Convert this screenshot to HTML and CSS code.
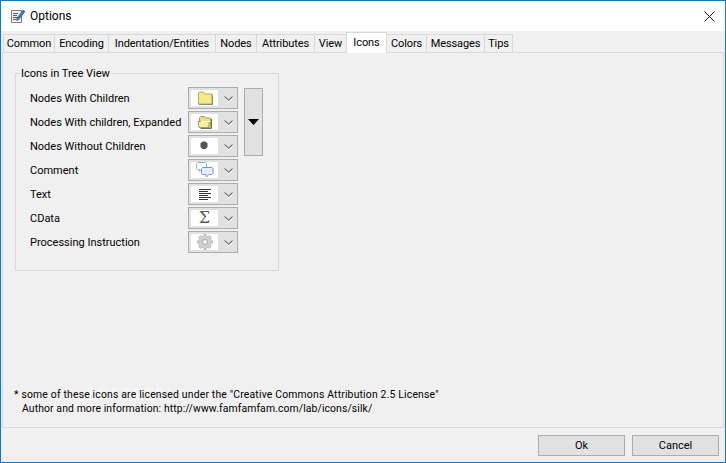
FILE: index.html
```html
<!DOCTYPE html>
<html lang="en">
<head>
<meta charset="utf-8">
<title>Options</title>
<link rel="stylesheet" href="styles.css">
</head>
<body>
<div class="window">
  <header class="titlebar">
    <svg class="app-icon" width="16" height="16" viewBox="0 0 16 16">
      <path d="M1.500 2.500h10v12h-10z" fill="#f4f4f4" stroke="#7d7d7d"/>
      <path d="M3 5.500h5M3 7.500h4M3 9.500h5M3 11.500h3" stroke="#555" fill="none"/>
      <path d="M7 10l6-8 2 1.500-6 8-2.500 1z" fill="#3d7fc4" stroke="#25527f" stroke-width=".6"/>
    </svg>
    <span class="title">Options</span>
    <svg class="close" width="11" height="11" viewBox="0 0 11 11"><path d="M.5.500l10 10M10.500.500l-10 10" stroke="#111" stroke-width="1" fill="none"/></svg>
  </header>
  <nav class="tabs">
    <span class="tab t-common">Common</span>
    <span class="tab t-encoding">Encoding</span>
    <span class="tab t-indent">Indentation/Entities</span>
    <span class="tab t-nodes">Nodes</span>
    <span class="tab t-attr">Attributes</span>
    <span class="tab t-view">View</span>
    <span class="tab active t-icons">Icons</span>
    <span class="tab t-colors">Colors</span>
    <span class="tab t-messages">Messages</span>
    <span class="tab t-tips">Tips</span>
  </nav>
  <main class="panel">
    <section class="group">
      <h2 class="legend">Icons in Tree View</h2>
      <div class="group-body">
        <div class="rows">
          <div class="row"><span class="label">Nodes With Children</span>
            <div class="combo"><span class="swatch">
              <svg width="16" height="16" viewBox="0 0 16 16"><path d="M1.500 14v-11l1-1h4l1 2h7.500v10z" fill="#f5ec86" stroke="#b3a85c"/><path d="M2 14.500h14M15.500 5v9" stroke="#8a8a7c"/></svg>
            </span><svg class="chev" width="9" height="5" viewBox="0 0 9 5"><path d="M.5.500l4 3.500 4-3.500" fill="none" stroke="#444"/></svg></div></div>
          <div class="row"><span class="label">Nodes With children, Expanded</span>
            <div class="combo"><span class="swatch">
              <svg width="16" height="16" viewBox="0 0 16 16"><path d="M2.500 13.500v-10l1-1h4l1 1.500h5v9.500z" fill="#eee07a" stroke="#a89d55"/><path d="M1 7.500h10l1.500 1.500-1.500 4.500h-9z" fill="#f7f09a" stroke="#a89d55"/><path d="M4 7.500h9.500" stroke="#fff"/><path d="M14.500 5v9.500h-11" fill="none" stroke="#6e6e62"/></svg>
            </span><svg class="chev" width="9" height="5" viewBox="0 0 9 5"><path d="M.5.500l4 3.500 4-3.500" fill="none" stroke="#444"/></svg></div></div>
          <div class="row"><span class="label">Nodes Without Children</span>
            <div class="combo"><span class="swatch">
              <svg width="16" height="16" viewBox="0 0 16 16"><path d="M5.500 3.500h3l1 1 1 1v3.500l-1 1-1 1h-3l-1-1-1-1V5.500l1-1z" fill="#555"/></svg>
            </span><svg class="chev" width="9" height="5" viewBox="0 0 9 5"><path d="M.5.500l4 3.500 4-3.500" fill="none" stroke="#444"/></svg></div></div>
          <div class="row"><span class="label">Comment</span>
            <div class="combo"><span class="swatch">
              <svg width="18" height="16" viewBox="0 0 18 16"><path d="M1.500.500h8l1 1v5l-1 1h-4l-2 2v-2h-2l-1-1v-5z" fill="#fff" stroke="#8eb4dc"/><path d="M6.500 5.500h9.500l1 1v5l-1 1h-3l-2.500 2.500-.5-2.500h-3.500l-1-1v-5z" fill="#e3eefa" stroke="#6c9bd0"/></svg>
            </span><svg class="chev" width="9" height="5" viewBox="0 0 9 5"><path d="M.5.500l4 3.500 4-3.500" fill="none" stroke="#444"/></svg></div></div>
          <div class="row"><span class="label">Text</span>
            <div class="combo"><span class="swatch">
              <svg width="16" height="16" viewBox="0 0 16 16"><path d="M2 3.500h12M2 5.500h9M2 7.500h12M2 9.500h9M2 11.500h12M2 13.500h9" stroke="#333" fill="none"/></svg>
            </span><svg class="chev" width="9" height="5" viewBox="0 0 9 5"><path d="M.5.500l4 3.500 4-3.500" fill="none" stroke="#444"/></svg></div></div>
          <div class="row"><span class="label">CData</span>
            <div class="combo"><span class="swatch"><span class="sigma">Σ</span></span><svg class="chev" width="9" height="5" viewBox="0 0 9 5"><path d="M.5.500l4 3.500 4-3.500" fill="none" stroke="#444"/></svg></div></div>
          <div class="row"><span class="label">Processing Instruction</span>
            <div class="combo"><span class="swatch">
              <svg width="16" height="16" viewBox="0 0 16 16"><path d="M7 0h2l.4 2 1.500.6L12.600 1.500 14.500 3.400l-1.100 1.700.6 1.500 2 .4v2l-2 .4-.6 1.500 1.100 1.700-1.900 1.900-1.700-1.100-1.500.6-.4 2H7l-.4-2-1.500-.6-1.700 1.100L1.500 12.600l1.100-1.700L2 9.400 0 9V7l2-.4.600-1.500L1.500 3.400 3.400 1.500l1.700 1.100L6.600 2z" fill="#cfcfcf" stroke="#a0a0a0" stroke-width=".5"/><circle cx="8" cy="8" r="2.500" fill="#fafafa" stroke="#a5a5a5"/></svg>
            </span><svg class="chev" width="9" height="5" viewBox="0 0 9 5"><path d="M.5.500l4 3.500 4-3.500" fill="none" stroke="#444"/></svg></div></div>
        </div>
        <button class="more" type="button" aria-label="More"><svg width="11" height="6" viewBox="0 0 11 6"><path d="M0 0h11L5.500 6z" fill="#000"/></svg></button>
      </div>
    </section>
    <div class="watermark">SOFTPEDIA</div>
    <p class="note"><span class="line-a">* some of these icons are licensed under the "Creative Commons Attribution 2.5 License"</span><br><span class="line-b">Author and more information: http://www.famfamfam.com/lab/icons/silk/</span></p>
  </main>
  <footer class="actions">
    <button class="btn" type="button">Ok</button>
    <button class="btn" type="button">Cancel</button>
  </footer>
</div>
</body>
</html>
```
FILE: styles.css
```css
* { box-sizing: border-box; }
html, body { margin: 0; padding: 0; }
body {
  width: 726px;
  height: 463px;
  overflow: hidden;
  font-family: Roboto, "Noto Sans", sans-serif;
  font-size: 11px;
  color: #000;
  background: #f0f0f0;
}
.window {
  width: 726px;
  height: 463px;
  border: 1px solid #0a7ad1;
  display: flex;
  flex-direction: column;
  background: #f0f0f0;
}
.titlebar {
  height: 30px;
  flex: none;
  background: #fff;
  display: flex;
  align-items: center;
  padding: 0 10px 0 9px;
}
.app-icon { flex: none; margin-right: 4px; }
.title { font-size: 12px; flex: 1; }
.close { flex: none; }
.tabs {
  height: 22px;
  flex: none;
  display: flex;
  align-items: flex-end;
  padding-left: 1px;
  margin: 0 1px;
  border-bottom: 1px solid #d9d9d9;
}
.tab {
  height: 18px;
  border: 1px solid #d9d9d9;
  border-bottom: 0;
  margin-left: -1px;
  display: flex;
  align-items: center;
  justify-content: center;
  white-space: nowrap;
  padding-bottom: 1px;
  letter-spacing: -.1px;
}
.tab:first-child { margin-left: 0; }
.tab.active {
  height: 21px;
  margin-bottom: -1px;
  background: #fff;
  padding-bottom: 1px;
  position: relative;
}
.t-common { width: 52px; }
.t-encoding { width: 55px; }
.t-indent { width: 108px; }
.t-nodes { width: 42px; }
.t-attr { width: 59px; }
.t-view { width: 33px; }
.t-icons { width: 41px; }
.t-colors { width: 41px; }
.t-messages { width: 59px; }
.t-tips { width: 29px; }
.panel {
  flex: 1;
  min-height: 0;
  margin: 0 1px;
  border-bottom: 1px solid #d9d9d9;
  border-left: 1px solid #d9d9d9;
  border-right: 1px solid #d9d9d9;
  padding: 20px 0 0 12px;
  display: flex;
  flex-direction: column;
  position: relative;
}
.group {
  width: 264px;
  height: 198px;
  flex: none;
  border: 1px solid #d9d9d9;
  position: relative;
  padding: 13px 0 0 14px;
}
.legend {
  position: absolute;
  top: -8px;
  left: 4px;
  margin: 0;
  padding: 0 1px;
  font: inherit;
  line-height: 15px;
  background: #f0f0f0;
}
.group-body { display: flex; align-items: flex-start; gap: 6px; }
.rows { display: flex; flex-direction: column; gap: 2px; }
.row { display: flex; align-items: center; justify-content: space-between; width: 208px; height: 22px; }
.label { white-space: nowrap; }
.combo {
  width: 50px;
  height: 22px;
  border: 1px solid #adadad;
  background: #e1e1e1;
  display: flex;
  align-items: center;
  padding-left: 2px;
  flex: none;
}
.swatch {
  width: 27px;
  height: 16px;
  background: #fff;
  display: flex;
  align-items: center;
  justify-content: center;
  flex: none;
}
.chev { margin-left: 6px; flex: none; }
.sigma { font-family: "DejaVu Serif", serif; font-size: 16px; line-height: 16px; color: #5c5c5c; }
.more {
  width: 19px;
  height: 68px;
  margin-top: 1px;
  padding: 0;
  border: 1px solid #adadad;
  background: #e1e1e1;
  display: flex;
  align-items: center;
  justify-content: center;
}
.watermark {
  position: absolute;
  left: 83px;
  top: 331px;
  font-size: 17px;
  font-weight: 700;
  letter-spacing: 1px;
  color: #f6f6f6;
}
.note {
  margin: auto 0 11px -1px;
  line-height: 14px;
  white-space: nowrap;
  position: relative;
  font-size: 10.4px;
}
.line-a { letter-spacing: .18px; }
.line-b { letter-spacing: .11px; padding-left: 8px; }
.actions {
  height: 34px;
  flex: none;
  display: flex;
  justify-content: flex-end;
  gap: 7px;
  padding: 7px 6px 0 0;
}
.btn {
  width: 87px;
  height: 21px;
  padding: 0;
  border: 1px solid #adadad;
  background: #e1e1e1;
  font: inherit;
  color: #000;
}
```
